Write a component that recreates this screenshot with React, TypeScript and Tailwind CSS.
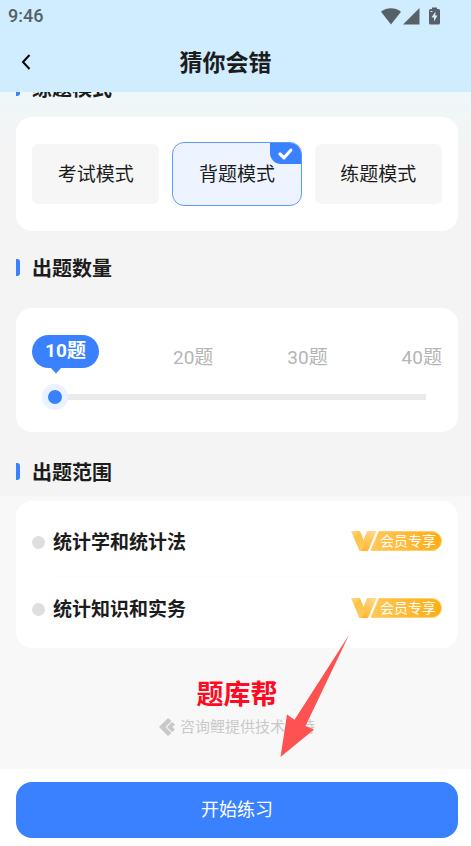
import { useState } from 'react'

const MODES = ['考试模式', '背题模式', '练题模式']
const COUNTS = [10, 20, 30, 40]
const SCOPES = ['统计学和统计法', '统计知识和实务']

function StatusBar() {
  return (
    <div className="flex h-8 items-center justify-between pl-2 pr-[31px] text-[#576067]">
      <span className="text-[18px] leading-8 font-medium">9:46</span>
      <div className="flex items-center">
        <svg width="20" height="18" viewBox="0 0 20 18" fill="currentColor" aria-hidden="true">
          <path d="M10 17.5 0 4.8C5.700.2 14.300.2 20 4.800Z" />
        </svg>
        <svg className="ml-[2px]" width="17" height="18" viewBox="0 0 17 18" fill="currentColor" aria-hidden="true">
          <path d="M16.500 1v16.500H0Z" />
        </svg>
        <svg className="ml-[9px]" width="11" height="18" viewBox="0 0 11 18" aria-hidden="true">
          <path d="M3 .5h5V2h1.500A1.500 1.500 0 0 1 11 3.500V16a1.500 1.500 0 0 1-1.500 1.500h-8A1.500 1.500 0 0 1 0 16V3.500A1.500 1.500 0 0 1 1.500 2H3Z" fill="currentColor" />
          <path d="M6.500 4.500 2.500 10.500H5V14.500L8.500 8.500H6.300Z" fill="#d0edff" />
          <path d="M1.500 4.500H3.500" stroke="#d0edff" />
        </svg>
      </div>
    </div>
  )
}

function SectionTitle({ children, className }: { children: string; className: string }) {
  return (
    <h2 className={`flex items-start gap-3 text-[20px] leading-7 font-bold text-[#1c1c1c] ${className}`}>
      <span className="mt-1 h-[17px] w-1 rounded-r-[3px] bg-[#3981ff]" />
      {children}
    </h2>
  )
}

function ModePicker() {
  const [mode, setMode] = useState(MODES[1])

  return (
    <div className="grid h-[114px] grid-cols-3 items-center gap-3.5 rounded-2xl bg-white px-4">
      {MODES.map(m => {
        const active = m === mode
        return (
          <label
            key={m}
            className={`relative flex cursor-pointer items-center justify-center overflow-hidden pt-0.5 text-[19px] leading-7 text-[#1c1c1c] ${
              active ? '-mx-px h-16 rounded-xl border border-[#5d9aff] bg-[#edf4ff]' : 'h-[60px] rounded-md bg-[#f6f6f6]'
            }`}
          >
            <input type="radio" name="mode" className="sr-only" checked={active} onChange={() => setMode(m)} />
            {m}
            {active && (
              <span className="absolute top-0 right-0 flex h-[21px] w-[31px] items-center justify-center rounded-bl-[11px] bg-[#3981ff]">
                <svg width="15" height="12" viewBox="0 0 15 12" fill="none" stroke="#fff" strokeWidth="3.200" strokeLinecap="round" strokeLinejoin="round" aria-hidden="true">
                  <path d="M2 6 6 9.800 12.800 2.200" />
                </svg>
              </span>
            )}
          </label>
        )
      })}
    </div>
  )
}

function CountPicker() {
  const [count, setCount] = useState(10)

  return (
    <div className="rounded-2xl bg-white px-4 pt-[27px] pb-[22px]">
      <div className="flex items-start justify-between text-[19px] leading-7">
        {COUNTS.map(c =>
          c === count ? (
            <button key={c} type="button" className="relative h-[33px] w-[67px] rounded-full bg-[#3981ff] pb-0.5 font-bold text-white">
              {c}题
              <svg className="absolute top-8 left-[18px]" width="12" height="7" viewBox="0 0 12 7" fill="#3981ff" aria-hidden="true">
                <path d="M0 0h12L6 6.500Z" />
              </svg>
            </button>
          ) : (
            <button key={c} type="button" onClick={() => setCount(c)} className="h-11 pt-0.5 text-[#b5b5b5]">
              {c}题
            </button>
          )
        )}
      </div>
      <div className="mt-[5px] pr-4 pl-[10px]">
        <input
          type="range"
          aria-label="出题数量"
          min={10}
          max={40}
          step={10}
          value={count}
          onChange={e => setCount(Number(e.target.value))}
          className="block h-[26px] w-full cursor-pointer appearance-none bg-transparent outline-none [&::-webkit-slider-runnable-track]:h-[6px] [&::-webkit-slider-runnable-track]:bg-[linear-gradient(to_right,transparent_20px,#ebebeb_20px)] [&::-webkit-slider-thumb]:-mt-[10px] [&::-webkit-slider-thumb]:size-[26px] [&::-webkit-slider-thumb]:appearance-none [&::-webkit-slider-thumb]:rounded-full [&::-webkit-slider-thumb]:border-[6px] [&::-webkit-slider-thumb]:border-[#eaf2ff] [&::-webkit-slider-thumb]:bg-[#3981ff]"
        />
      </div>
    </div>
  )
}

function VipBadge() {
  return (
    <span className="relative mb-1 flex h-5 w-[91px] items-center justify-end pr-[6px] text-[14px] leading-5 text-white">
      <svg className="absolute inset-0" width="91" height="20" viewBox="0 0 91 20" aria-hidden="true">
        <defs>
          <linearGradient id="vipPill" x1="0" x2="1">
            <stop offset="0" stopColor="#ffc757" />
            <stop offset="1" stopColor="#ffad14" />
          </linearGradient>
          <linearGradient id="vipLeft" x1="0" y1="0" x2="0.600" y2="1">
            <stop offset="0" stopColor="#ffdc8c" />
            <stop offset="0.400" stopColor="#fcc244" />
            <stop offset="1" stopColor="#ffc95e" />
          </linearGradient>
          <linearGradient id="vipRight" x1="0.800" y1="0" x2="0.300" y2="1">
            <stop offset="0" stopColor="#ffd88a" />
            <stop offset="1" stopColor="#ffb52a" />
          </linearGradient>
        </defs>
        <path d="M28 .5H81a9.500 9.500 0 0 1 0 19H20Z" fill="url(#vipPill)" stroke="#ffcf70" />
        <path d="M16 0h9.500L17 20H8.500Z" fill="url(#vipRight)" />
        <path d="M0 0h9l5 12-3.500 8H8.500Z" fill="url(#vipLeft)" />
      </svg>
      <span className="relative">会员专享</span>
    </span>
  )
}

function ScopeList() {
  const [scope, setScope] = useState('')

  return (
    <div className="rounded-2xl bg-white px-4 pt-2 pb-[5px]">
      {SCOPES.map((s, i) => (
        <label key={s} className="flex cursor-pointer items-center gap-2">
          <input
            type="radio"
            name="scope"
            checked={scope === s}
            onChange={() => setScope(s)}
            className="size-[13px] shrink-0 appearance-none rounded-full bg-[#dfdfdf] checked:bg-[#3981ff]"
          />
          <span className={`flex h-[67px] flex-1 items-center justify-between ${i > 0 ? 'border-t border-[#fbfbfb]' : ''}`}>
            <span className="text-[19px] leading-7 font-bold text-[#1c1c1c]">{s}</span>
            <VipBadge />
          </span>
        </label>
      ))}
    </div>
  )
}

function Credit() {
  return (
    <div className="relative flex flex-col items-center pt-[31px] pb-7 pl-[3px]">
      <strong className="text-[27px] leading-8 font-bold text-[#ff0a22]">题库帮</strong>
      <p className="mt-1 flex items-center gap-1 text-[15px] leading-6 text-[#c9c9c9]">
        <svg width="17" height="18" viewBox="0 0 17 18" fill="#c9c9c9" aria-hidden="true">
          <path d="M0 9 9 0l3.500 3L6.500 9l6 6L9 18Z" />
          <path d="M8 9l5-5 3 2.500L13.500 9l2.500 2.500-3 2.500Z" />
        </svg>
        咨询鲤提供技术支持
      </p>
      <svg className="absolute -top-[13px] left-1/2 ml-11" width="70" height="123" viewBox="0 0 70 123" fill="#fe5152" aria-hidden="true">
        <path d="M69 0 25.500 91 34 94.500.5 122 7 79.500l7.500 5.200Z" />
      </svg>
    </div>
  )
}

export default function App() {
  return (
    <div className="flex min-h-screen flex-col bg-[#f4f4f4] font-[Roboto,'Noto_Sans_CJK_SC',sans-serif]">
      <header className="bg-[#d0edff]">
        <StatusBar />
        <div className="grid h-[60px] grid-cols-[1fr_auto_1fr] items-center pr-9 pl-4">
          <button type="button" aria-label="返回" className="flex size-6 items-center">
            <svg className="ml-[5px]" width="10" height="16" viewBox="0 0 10 16" fill="none" stroke="#000" strokeWidth="2" aria-hidden="true">
              <path d="M8.500 1 2 8l6.500 7" />
            </svg>
          </button>
          <h1 className="pt-1 text-[23px] leading-8 font-bold text-[#1c1c1c]">猜你会错</h1>
        </div>
      </header>

      <main className="flex flex-1 flex-col overflow-hidden bg-[linear-gradient(#eff7f9,#f4f4f4_60px)]">
        <section className="pr-[13px] pl-4">
          <SectionTitle className="-mt-[17px] mb-[14px]">练题模式</SectionTitle>
          <ModePicker />
        </section>
        <section className="pr-[13px] pl-4">
          <SectionTitle className="mt-6 mb-[25px]">出题数量</SectionTitle>
          <CountPicker />
        </section>
        <section className="flex flex-1 flex-col">
          <SectionTitle className="mt-[27px] mb-[9px] ml-4">出题范围</SectionTitle>
          <div className="flex-1 bg-[#f8f8f8] pt-[5px]">
            <div className="pr-[13px] pl-4">
              <ScopeList />
            </div>
            <Credit />
          </div>
        </section>
      </main>

      <footer className="bg-white pt-[13px] pr-[13px] pb-2 pl-4">
        <button type="button" className="h-14 w-full rounded-2xl bg-[#3981ff] text-[18px] leading-7 text-white">
          开始练习
        </button>
      </footer>
    </div>
  )
}
